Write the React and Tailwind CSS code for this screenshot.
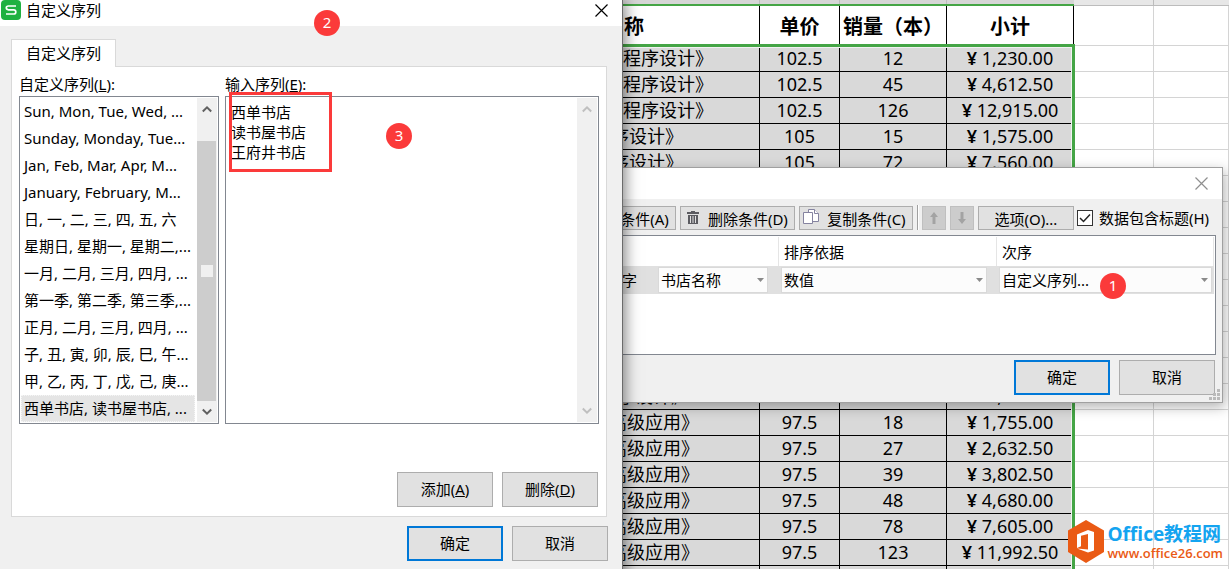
import React from "react";

const sheetRows = [
  ["程序设计》", "102.5", "12", "1,230.00", "pl-[623px]"],
  ["程序设计》", "102.5", "45", "4,612.50", "pl-[623px]"],
  ["程序设计》", "102.5", "126", "12,915.00", "pl-[623px]"],
  ["序设计》", "105", "15", "1,575.00", "pl-[611px]"],
  ["序设计》", "105", "72", "7,560.00", "pl-[611px]"],
  ...Array.from({ length: 8 }, () => ["", "", "", "", ""]),
  ["序设计》", "97.5", "126", "12,285.00", "pl-[617px]"],
  ["高级应用》", "97.5", "18", "1,755.00", "pl-[609px]"],
  ["高级应用》", "97.5", "27", "2,632.50", "pl-[609px]"],
  ["高级应用》", "97.5", "39", "3,802.50", "pl-[609px]"],
  ["高级应用》", "97.5", "48", "4,680.00", "pl-[609px]"],
  ["高级应用》", "97.5", "78", "7,605.00", "pl-[609px]"],
  ["高级应用》", "97.5", "123", "11,992.50", "pl-[609px]"],
  ["", "", "", "", ""],
];

const sequences = [
  "Sun, Mon, Tue, Wed, ...",
  "Sunday, Monday, Tue...",
  "Jan, Feb, Mar, Apr, M...",
  "January, February, M...",
  "日, 一, 二, 三, 四, 五, 六",
  "星期日, 星期一, 星期二,...",
  "一月, 二月, 三月, 四月, ...",
  "第一季, 第二季, 第三季,...",
  "正月, 二月, 三月, 四月, ...",
  "子, 丑, 寅, 卯, 辰, 巳, 午...",
  "甲, 乙, 丙, 丁, 戊, 己, 庚...",
  "西单书店, 读书屋书店, ...",
];

function Sheet() {
  const dark = "border-r border-b border-black bg-[#d9d9d9] p-0 pb-[2px]";
  const light = "border-r border-b border-[#d4d4d4] bg-white p-0";
  const head = "border-r border-black bg-white p-0 pt-[2px] font-bold";
  return (
    <div className="w-full">
      <div className="flex h-[6px]">
        <div className="flex w-[1074px] shrink-0 border-b-2 border-[#45a546] bg-[#d6d6d6]">
          <span className="w-[760px] border-r border-[#bcbcbc]" />
          <span className="w-[80px] border-r border-[#bcbcbc]" />
          <span className="w-[107px] border-r border-[#bcbcbc]" />
        </div>
        <div className="flex grow border-b border-[#bcbcbc] bg-[#e7e7e7]">
          <span className="w-[80px] border-r border-[#bcbcbc]" />
        </div>
      </div>
      <div className="relative">
        <table className="w-full table-fixed border-separate border-spacing-0 text-center text-[18px] leading-[22px] text-black">
          <colgroup>
            <col className="w-[760px]" />
            <col className="w-[80px]" />
            <col className="w-[107px]" />
            <col className="w-[127px]" />
            <col className="w-[80px]" />
            <col />
          </colgroup>
          <thead>
            <tr className="h-[40px] text-[20px]">
              <th className={`${head} text-left`}>
                <div className="pl-[624px]">称</div>
              </th>
              <th className={head}>单价</th>
              <th className={`${head} whitespace-nowrap`}>销量（本）</th>
              <th className={head}>小计</th>
              <td className={light} />
              <td className={light} />
            </tr>
          </thead>
          <tbody>
            {sheetRows.map(([name, price, count, total, pad], i) => (
              <tr key={i} className="h-[26px]">
                <td className={`${dark} whitespace-nowrap text-left`}>
                  <div className={pad}>{name}</div>
                </td>
                <td className={dark}>{price}</td>
                <td className={dark}>{count}</td>
                <td className={`${dark} whitespace-nowrap`}>
                  {total && <b className="font-semibold">¥ </b>}
                  {total}
                </td>
                <td className={light} />
                <td className={light} />
              </tr>
            ))}
          </tbody>
        </table>
        <div className="pointer-events-none absolute top-[38px] bottom-0 left-0 w-[1075px] border-3 border-[#45a546]">
          <div className="h-full border-t border-r border-[#f2f2f2]" />
        </div>
      </div>
    </div>
  );
}

function CloseIcon({ color }) {
  return (
    <svg width="13" height="13" viewBox="0 0 13 13" stroke={color} strokeWidth="1.2" fill="none">
      <path d="M.5 .5l12 12M12.500 .5l-12 12" />
    </svg>
  );
}

function Chevron({ color, down }) {
  return (
    <svg width="10" height="8" viewBox="0 0 10 8" fill="none" stroke={color} strokeWidth="2">
      <path d={down ? "M.8 1.500L5 5.700 9.200 1.500" : "M.8 6.500L5 2.300 9.200 6.500"} />
    </svg>
  );
}

function Badge({ children, place }) {
  return (
    <span
      className={`absolute ${place} flex size-[26px] items-center justify-center rounded-full bg-[#fb3a3a] pb-[2px] text-[15px] leading-[20px] text-white`}
    >
      {children}
    </span>
  );
}

const button =
  "flex items-center justify-center border border-[#adadad] bg-[#e1e1e1] whitespace-nowrap";
const primary =
  "flex items-center justify-center border-2 border-[#0078d7] bg-[#e1e1e1] whitespace-nowrap";
const big = "h-[35px] w-[96px] pb-[2px]";
const small = "h-[24px] pt-[2px]";

function Drop({ value, label, width }) {
  return (
    <div className={`relative flex ${width} items-center`}>
      <select
        aria-label={label}
        defaultValue={value}
        className="h-[26px] w-full appearance-none border border-[#d9d9d9] bg-[#fcfcfc] pl-[2px] leading-[22px]"
      >
        <option>{value}</option>
      </select>
      <svg className="pointer-events-none absolute right-[4px]" width="7" height="4" viewBox="0 0 7 4">
        <path d="M0 0h7L3.500 4z" fill="#8a8a8a" />
      </svg>
    </div>
  );
}

function ArrowButton({ down }) {
  return (
    <button
      type="button"
      disabled
      aria-label={down ? "下移" : "上移"}
      className="flex size-[24px] items-center justify-center border border-[#bfbfbf] bg-[#cccccc]"
    >
      <svg width="8" height="12" viewBox="0 0 8 12" fill="#a3a3a3">
        <path d={down ? "M2.500 0h3v7H8l-4 5-4-5h2.500z" : "M2.500 12h3V5H8L4 0 0 5h2.500z"} />
      </svg>
    </button>
  );
}

function SortDialog() {
  return (
    <section className="absolute top-[167px] left-[500px] w-[723px] border border-[#a0a0a0] bg-[#f0f0f0] shadow-[2px_4px_12px_rgba(0,0,0,0.3)]">
      <header className="flex h-[31px] items-center justify-end bg-white pr-[14px]">
        <button type="button" aria-label="关闭">
          <CloseIcon color="#8f8f8f" />
        </button>
      </header>
      <div className="flex h-[36px] items-center justify-end pt-px pr-[13px]">
        <button type="button" className={`${button} ${small} mr-1 w-[114px] justify-end pr-[6px]`}>
          添加条件(A)
        </button>
        <button type="button" className={`${button} ${small} mr-1 w-[115px] gap-[9px]`}>
          <svg className="mb-[2px]" width="12" height="14" viewBox="0 0 12 14" fill="#5b5b60">
            <path d="M4 0h4v1h4v2H0V1h4z" />
            <path fillRule="evenodd" d="M1 4h10v9H1zM3 5v7h1V5zM5.500 5v7h1V5zM8 5v7h1V5z" />
          </svg>
          删除条件(D)
        </button>
        <button type="button" className={`${button} ${small} mr-1 w-[114px] gap-[8px] pr-[3px]`}>
          <svg className="mb-[3px]" width="16" height="16" viewBox="0 0 16 16" fill="#fff" stroke="#8583a0">
            <path d="M5.500 .5h6l4 4v8h-10z" />
            <path d="M11.500 .5v4h4" />
            <path d="M.5 3.500h9v11H.5z" />
          </svg>
          复制条件(C)
        </button>
        <span className="mr-[3px] h-[25px] w-[2px] border-l border-[#a0a0a0] bg-white" />
        <div className="mr-1 flex gap-1">
          <ArrowButton />
          <ArrowButton down />
        </div>
        <button type="button" className={`${button} ${small} mr-[3px] w-[96px]`}>
          选项(O)...
        </button>
        <label className="flex items-center gap-[6px] whitespace-nowrap">
          <span className="relative flex size-[16px]">
            <input
              type="checkbox"
              defaultChecked
              className="size-[16px] appearance-none border border-[#333] bg-white"
            />
            <svg className="pointer-events-none absolute inset-0" width="16" height="16" viewBox="0 0 16 16" fill="none" stroke="#222" strokeWidth="1.500">
              <path d="M3 8l3.500 3.500L13 4.500" />
            </svg>
          </span>
          数据包含标题(H)
        </label>
      </div>
      <div className="mr-[6px] h-[120px] border border-[#828790] bg-white p-px">
        <table className="w-full table-fixed border-separate border-spacing-0 text-left">
          <colgroup>
            <col />
            <col className="w-[218px]" />
            <col className="w-[217px]" />
          </colgroup>
          <thead>
            <tr className="h-[29px]">
              <th className="border-r border-[#e5e5e5] p-0 font-normal">列</th>
              <th className="border-r border-[#e5e5e5] py-0 pr-0 pl-[5px] font-normal">排序依据</th>
              <th className="border-r border-[#e5e5e5] py-0 pr-0 pl-[5px] font-normal">次序</th>
            </tr>
          </thead>
          <tbody>
            <tr className="h-[28px] bg-[#e0e0e0]">
              <td className="p-0 pr-[11px]">
                <div className="flex items-center justify-end gap-[21px]">
                  <span className="whitespace-nowrap">主要关键字</span>
                  <Drop label="主要关键字" value="书店名称" width="w-[110px]" />
                </div>
              </td>
              <td className="py-0 pr-[10px] pl-[2px]">
                <Drop label="排序依据" value="数值" width="w-full" />
              </td>
              <td className="py-0 pr-[2px] pl-[2px]">
                <Drop label="次序" value="自定义序列..." width="w-full" />
              </td>
            </tr>
          </tbody>
        </table>
      </div>
      <footer className="flex h-[47px] justify-end gap-[9px] pt-[5px] pr-[7px]">
        <button type="button" className={`${primary} ${big}`}>
          确定
        </button>
        <button type="button" className={`${button} ${big}`}>
          取消
        </button>
      </footer>
      <svg className="absolute right-[2px] bottom-[2px]" width="11" height="11" viewBox="0 0 11 11" fill="#bababa">
        <path d="M8 0h3v3H8zM4 4h3v3H4zM8 4h3v3H8zM0 8h3v3H0zM4 8h3v3H4zM8 8h3v3H8z" />
      </svg>
      <Badge place="top-[105px] left-[599px]">1</Badge>
    </section>
  );
}

function SequenceDialog() {
  return (
    <section className="absolute top-0 left-0 flex h-[600px] w-[623px] flex-col border-r border-[#6b6b6b] bg-[#f0f0f0] shadow-[2px_0_14px_rgba(0,0,0,0.5)]">
      <header className="flex h-[26px] shrink-0 items-start bg-white pr-[14px] pl-[1px]">
        <svg width="20" height="20" viewBox="0 0 20 20" fill="none">
          <rect width="20" height="20" rx="4" fill="#1fb141" />
          <path
            d="M15 6H7.500Q5.300 6 5.300 7.800T7.500 9.800H12.600Q14.800 9.800 14.800 11.900T12.600 14H5"
            stroke="#fff"
            strokeWidth="1.700"
          />
        </svg>
        <h1 className="ml-[5px] leading-[20px]">自定义序列</h1>
        <button type="button" aria-label="关闭" className="mt-[4px] ml-auto">
          <CloseIcon color="#000" />
        </button>
      </header>
      <div className="mt-[13px] flex pl-[11px]">
        <button
          type="button"
          className="relative -mb-px h-[28px] w-[105px] border border-b-0 border-[#d9d9d9] bg-white pb-[2px]"
        >
          自定义序列
        </button>
      </div>
      <div className="mr-[15px] ml-[11px] flex h-[451px] flex-col border border-[#d9d9d9] bg-white px-[7px]">
        <div className="flex gap-[6px] pt-[6px]">
          <div className="w-[200px]">
            <div id="list-label" className="h-[23px] leading-[23px]">
              自定义序列(<u>L</u>):
            </div>
            <div className="flex h-[328px] border border-[#828790] p-px">
              <ul role="listbox" aria-labelledby="list-label" className="grow">
                {sequences.map((text, i) => (
                  <li
                    key={text}
                    role="option"
                    aria-selected={i === 11}
                    className={
                      i === 11
                        ? "h-[27px] w-[174px] border border-dotted border-[#f5f5f5] bg-[#e5e5e5] pl-[2px] leading-[25px] whitespace-nowrap"
                        : "h-[27px] w-[174px] pl-[3px] leading-[27px] whitespace-nowrap"
                    }
                  >
                    {text}
                  </li>
                ))}
              </ul>
              <div className="flex w-[20px] flex-col bg-[#f0f0f0] pr-px">
                <div className="flex h-[43px] justify-center pt-[7px]">
                  <Chevron color="#606060" />
                </div>
                <div className="flex grow items-center justify-center bg-[#cdcdcd]">
                  <span className="size-[12px] bg-[#f0f0f0]" />
                </div>
                <div className="flex h-[21px] items-center justify-center">
                  <Chevron color="#606060" down />
                </div>
              </div>
            </div>
          </div>
          <div className="grow">
            <label htmlFor="entries" className="block h-[23px] leading-[23px]">
              输入序列(<u>E</u>):
            </label>
            <div className="relative flex h-[328px] border border-[#828790] p-px">
              <textarea
                id="entries"
                defaultValue={"西单书店\n读书屋书店\n王府井书店"}
                className="min-w-0 grow resize-none overflow-hidden pt-[4px] pl-[4px] leading-[20px] outline-none"
              />
              <div className="flex w-[20px] flex-col justify-between bg-[#f0f0f0] py-[7px] pr-px">
                <div className="flex justify-center">
                  <Chevron color="#bfbfbf" />
                </div>
                <div className="flex justify-center">
                  <Chevron color="#bfbfbf" down />
                </div>
              </div>
              <div className="pointer-events-none absolute -top-[5px] left-[3px] h-[80px] w-[103px] border-3 border-[#fb3a3a]" />
            </div>
          </div>
        </div>
        <div className="mt-[48px] mr-px flex justify-end gap-[9px]">
          <button type="button" className={`${button} ${big}`}>
            <span>
              添加(<u>A</u>)
            </span>
          </button>
          <button type="button" className={`${button} ${big}`}>
            <span>
              删除(<u>D</u>)
            </span>
          </button>
        </div>
      </div>
      <footer className="mt-[9px] flex justify-end gap-[9px] pr-[14px]">
        <button type="button" className={`${primary} ${big}`}>
          确定
        </button>
        <button type="button" className={`${button} ${big}`}>
          取消
        </button>
      </footer>
      <Badge place="top-[10px] left-[314px]">2</Badge>
      <Badge place="top-[123px] left-[386px]">3</Badge>
    </section>
  );
}

function SiteMark() {
  return (
    <a
      href="#office26"
      className="absolute top-[520px] right-[6px] flex items-center gap-[4px] whitespace-nowrap"
    >
      <svg width="36" height="43" viewBox="0 0 36 43">
        <path d="M18 0l18 10.500v21.500L18 43 0 32V10.500z" fill="#ea5a14" />
        <path fillRule="evenodd" d="M9 14.500L20 10l6 2v18.500L20 32.500 9 28.500l11 1V14l-7 1.800v10.400L9 28z" fill="#fff" />
      </svg>
      <span className="flex flex-col font-['Open_Sans','Noto_Sans_CJK_SC',sans-serif]">
        <span className="text-[19px] leading-[22px] font-bold text-[#14a4f0]">Office教程网</span>
        <span className="text-[13px] leading-[16px] font-semibold text-[#ea5a14]">www.office26.com</span>
      </span>
    </a>
  );
}

export default function App() {
  return (
    <main className="relative h-screen w-full overflow-hidden bg-white font-['Noto_Sans','Noto_Sans_CJK_SC',sans-serif] text-[15px] leading-[20px] text-black">
      <Sheet />
      <SortDialog />
      <SequenceDialog />
      <SiteMark />
    </main>
  );
}
